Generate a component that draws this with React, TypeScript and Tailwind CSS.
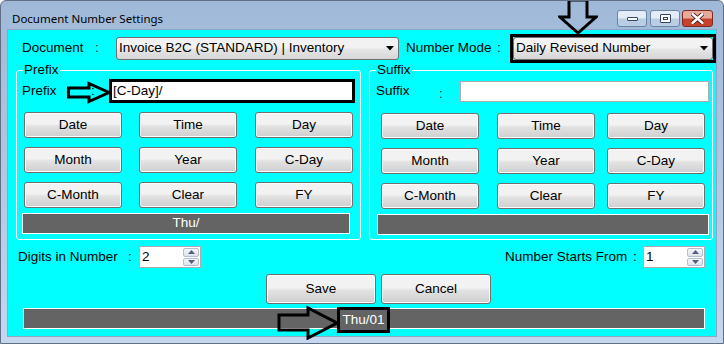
const BTN =
  "h-[26px] w-[98px] rounded-[3px] border border-[#707070] bg-gradient-to-b from-[#f2f2f2] from-45% via-[#e2e2e2] via-55% to-[#cfcfcf] text-[13.5px] leading-none text-black shadow-[inset_0_0_0_1px_#fcfcfc]";

function WinButton({ label }: { label: string }) {
  return <button className={BTN}>{label}</button>;
}

function Combo({ value, width }: { value: string; width: string }) {
  return (
    <div
      className={`${width} flex h-[23px] items-center justify-between rounded-[3px] border border-[#707070] bg-gradient-to-b from-[#f2f2f2] from-45% via-[#e5e5e5] via-55% to-[#d6d6d6] pl-[2px] pr-[4px] text-black`}
    >
      <span>{value}</span>
      <svg width="8" height="5" viewBox="0 0 8 5">
        <path d="M0 0 H8 L4 4.5 Z" fill="#000" />
      </svg>
    </div>
  );
}

function Spinner({ value }: { value: string }) {
  return (
    <div className="flex h-[22px] w-[62px] items-center justify-between border border-[#abadb3] bg-white pl-[2px] pr-[1px]">
      <span>{value}</span>
      <div className="flex h-[18px] w-[16px] flex-col gap-[1px]">
        {[0, 1].map((i) => (
          <div
            key={i}
            className="flex flex-1 items-center justify-center rounded-[2px] border border-[#b4c0cf] bg-gradient-to-b from-[#f4f6f8] to-[#dfe4ea]"
          >
            <svg width="7" height="4" viewBox="0 0 7 4">
              <path d={i === 0 ? "M0 4 L3.5 0 L7 4 Z" : "M0 0 L3.5 4 L7 0 Z"} fill="#4d6185" />
            </svg>
          </div>
        ))}
      </div>
    </div>
  );
}

function StatusBar({ text, className }: { text: string; className: string }) {
  return (
    <div
      className={`${className} flex h-[21px] items-center justify-center border border-white bg-[#646464] text-white`}
    >
      {text}
    </div>
  );
}

const PREFIX_BTNS = ["Date", "Time", "Day", "Month", "Year", "C-Day", "C-Month", "Clear", "FY"];

export default function App() {
  return (
    <div
      className="relative h-[344px] w-[724px] overflow-hidden rounded-t-[6px] border border-[#5f6f86] bg-gradient-to-b from-[#9fb9d8] to-[#c4d7ee]"
      style={{ fontFamily: '"Liberation Sans", Arial, sans-serif' }}
    >
      {/* title bar */}
      <div className="flex h-[29px] items-start">
        <div
          className="pl-[11px] pt-[10px] text-[11.5px] leading-[16px] text-black"
          style={{ fontFamily: '"Noto Sans", "Open Sans", sans-serif' }}
        >
          Document Number Settings
        </div>
        <div className="ml-auto mr-[10px] mt-[9px] flex">
          <div className="flex h-[17px] w-[30px] items-center justify-center rounded-[3px] border border-[#6d84a4] bg-gradient-to-b from-[#e4edf7] from-45% to-[#b9cde4] to-55%">
            <div className="h-[4px] w-[11px] rounded-[1px] border border-[#35475f] bg-white" />
          </div>
          <div className="ml-[3px] flex h-[17px] w-[30px] items-center justify-center rounded-[3px] border border-[#6d84a4] bg-gradient-to-b from-[#e4edf7] from-45% to-[#b9cde4] to-55%">
            <div className="flex h-[9px] w-[11px] items-center justify-center rounded-[1px] border border-[#35475f] bg-white">
              <div className="h-[3px] w-[5px] border border-[#35475f]" />
            </div>
          </div>
          <div className="ml-[2px] flex h-[17px] w-[31px] items-center justify-center rounded-[3px] border border-[#7d2a22] bg-gradient-to-b from-[#e9a99a] from-45% to-[#c5422f] to-55%">
            <svg width="13" height="11" viewBox="0 0 13 11">
              <path
                d="M1.5 1 L11.5 10 M11.5 1 L1.5 10"
                stroke="#3b1712"
                strokeWidth="4.2"
                strokeLinecap="round"
              />
              <path
                d="M1.5 1 L11.5 10 M11.5 1 L1.5 10"
                stroke="#fff"
                strokeWidth="2.4"
                strokeLinecap="round"
              />
            </svg>
          </div>
        </div>
      </div>

      {/* client area */}
      <div className="mx-[7px] flex h-[306px] flex-col bg-[#00ffff] text-[13.5px] text-black shadow-[0_0_0_1px_#8ea6c4]">
        {/* document row */}
        <div className="ml-[14px] mt-[7px] flex h-[23px] items-center">
          <span className="w-[73px]">Document</span>
          <span className="w-[21px]">:</span>
          <Combo value="Invoice B2C (STANDARD) | Inventory" width="w-[283px]" />
          <span className="ml-[7px] w-[91px]">Number Mode</span>
          <span className="w-[16px]">:</span>
          <div className="outline-[3px] outline-black outline-solid">
            <Combo value="Daily Revised Number" width="w-[200px]" />
          </div>
        </div>

        {/* prefix / suffix */}
        <div className="ml-[8px] mt-[3px] flex gap-[8px]">
          <fieldset className="w-[345px] rounded-[3px] border border-white">
            <legend className="ml-[6px] px-[1px] leading-[14px]">Prefix</legend>
            <div className="mt-[2px] flex h-[24px] items-center">
              <span className="ml-[5px] w-[69px]">Prefix</span>
              <span className="w-[18px]">:</span>
              <div className="flex h-[24px] w-[246px] items-center border-[3px] border-black bg-white pl-[1px]">
                [C-Day]/
              </div>
            </div>
            <div className="ml-[7px] mt-[9px] grid grid-cols-[115px_116px_98px] gap-y-[9px]">
              {PREFIX_BTNS.map((b) => (
                <WinButton key={b} label={b} />
              ))}
            </div>
            <StatusBar text="Thu/" className="mb-[4px] ml-[5px] mt-[5px] w-[328px]" />
          </fieldset>

          <fieldset className="w-[344px] rounded-[3px] border border-white">
            <legend className="ml-[6px] px-[1px] leading-[14px]">Suffix</legend>
            <div className="mt-[2px] flex h-[24px] items-center">
              <span className="ml-[6px] w-[63px]">Suffix</span>
              <span className="mt-[7px] w-[21px]">:</span>
              <div className="h-[21px] w-[249px] border border-[#abadb3] bg-white" />
            </div>
            <div className="ml-[11px] mt-[10px] grid grid-cols-[116px_110px_98px] gap-y-[9px]">
              {PREFIX_BTNS.map((b) => (
                <WinButton key={b} label={b} />
              ))}
            </div>
            <StatusBar text="" className="mb-[4px] ml-[7px] mt-[5px] w-[332px]" />
          </fieldset>
        </div>

        {/* digits row */}
        <div className="mt-[6px] flex h-[22px] items-center pl-[10px] pr-[11px]">
          <span className="w-[110px]">Digits in Number</span>
          <span className="w-[11px]">:</span>
          <Spinner value="2" />
          <span className="ml-auto w-[128px]">Number Starts From</span>
          <span className="w-[10px]">:</span>
          <Spinner value="1" />
        </div>

        {/* save / cancel */}
        <div className="ml-[258px] mt-[6px] flex gap-[5px]">
          <button className={`${BTN} h-[30px] w-[110px]`}>Save</button>
          <button className={`${BTN} h-[30px] w-[110px]`}>Cancel</button>
        </div>

        <StatusBar text="Thu/01" className="ml-[15px] mt-[4px] w-[682px]" />
      </div>

      {/* annotations */}
      <svg className="absolute left-[557px] top-[-1px]" width="40" height="35" viewBox="0 0 40 35">
        <path
          d="M11 0 H29 V17 H38 L20 33 L2 17 H11 Z"
          fill="none"
          stroke="#000"
          strokeWidth="3"
        />
      </svg>
      <svg className="absolute left-[65px] top-[80px]" width="46" height="24" viewBox="0 0 46 24">
        <path
          d="M2.5 7 H23 V2.5 L43 11.5 L23 20.5 V16 H2.5 Z"
          fill="none"
          stroke="#000"
          strokeWidth="3"
        />
      </svg>
      <svg className="absolute left-[275px] top-[304px]" width="64" height="35" viewBox="0 0 64 35">
        <path
          d="M3 10 H32 V3 L61 18 L32 33 V25 H3 Z"
          fill="none"
          stroke="#000"
          strokeWidth="3"
        />
      </svg>
      <div className="absolute left-[336px] top-[306px] flex h-[26px] w-[53px] items-center justify-center border-[3px] border-black bg-[#646464] text-[13.5px] text-white">
        Thu/01
      </div>
    </div>
  );
}
